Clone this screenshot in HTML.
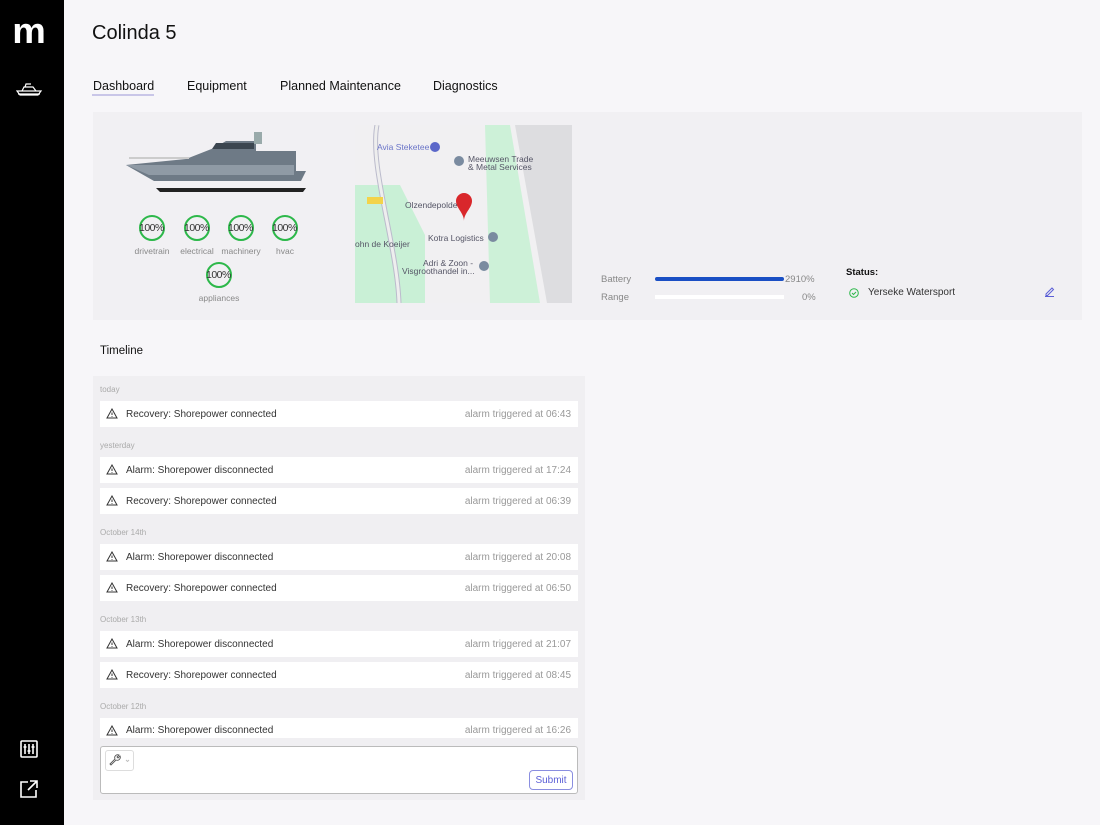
<!DOCTYPE html>
<html><head><meta charset="utf-8"><style>
*{box-sizing:border-box;margin:0;padding:0}
body{width:1100px;height:825px;background:#f7f6f9;font-family:"Liberation Sans",sans-serif;position:relative;overflow:hidden;color:#222}
.side{position:absolute;left:0;top:0;width:64px;height:825px;background:#000}
.abs{position:absolute}
.tab{position:absolute;top:79px;font-size:12.5px;color:#111}
.panel{position:absolute;left:93px;top:112px;width:989px;height:208px;background:#f1f0f3}
.g{position:absolute;width:26px;height:26px;border:2px solid #2db84a;border-radius:50%;font-size:10.5px;line-height:22px;text-align:center;color:#333;letter-spacing:-.5px;text-indent:-2px}
.gl{position:absolute;font-size:8.5px;color:#888;text-align:center;width:70px}
.tl{position:absolute;left:93px;top:376px;width:492px;height:424px;background:#f0eff2}
.lbl{position:absolute;left:100px;font-size:8px;color:#aaa}
.row{position:absolute;left:100px;width:478px;height:26px;background:#fff;font-size:10px;line-height:27px;color:#333;padding-left:26px}
.row .r{position:absolute;right:7px;top:0;color:#999}
.row svg{position:absolute;left:6px;top:7px}
</style></head><body>
<div class="side">
<div class="abs" style="left:13px;top:13px;color:#fff;font-size:36px;font-weight:bold;line-height:36px;letter-spacing:-1px;transform:scaleX(1.05)">m</div>
<svg class="abs" style="left:16px;top:81px" width="27" height="16" viewBox="0 0 27 16" fill="none" stroke="#fff" stroke-width="1.2"><path d="M1 10h24l-3 4H4zM6 10l2-4h9l3 4M9 6l1-3h5M2 13h22"/></svg>
<svg class="abs" style="left:20px;top:740px" width="18" height="18" viewBox="0 0 18 18" fill="none" stroke="#fff" stroke-width="1.6"><rect x="1" y="1" width="16" height="16" rx="1"/><path d="M5 4v10M9 4v10M13 4v10M3.5 7h3M7.5 11h3M11.5 7h3"/></svg>
<svg class="abs" style="left:20px;top:780px" width="18" height="18" viewBox="0 0 18 18" fill="none" stroke="#fff" stroke-width="1.6"><path d="M8 2H1v15h15v-7M10 1h7v7M17 1L8 10"/></svg>
</div>
<div class="abs" style="left:92px;top:22px;font-size:20px;color:#111">Colinda 5</div>
<div class="tab" style="left:93px">Dashboard</div>
<div class="abs" style="left:92px;top:94px;width:62px;height:2px;background:#c9c6e8"></div>
<div class="tab" style="left:187px">Equipment</div>
<div class="tab" style="left:280px">Planned Maintenance</div>
<div class="tab" style="left:433px">Diagnostics</div>
<div class="panel"></div>
<svg class="abs" style="left:124px;top:128px" width="182" height="66" viewBox="0 0 182 66"><path d="M2 37l60-6 28-11 12-7h30v10h40v20h10l-5 10H30z" fill="#6e7a86"/><path d="M2 37h168v10H25z" fill="#8f9aa5"/><path d="M92 15h38v6H88z" fill="#3c4650"/><rect x="130" y="4" width="8" height="12" fill="#9aa"/><path d="M32 60h150l-3 4H36z" fill="#222"/><path d="M5 30h60" stroke="#ccc" stroke-width="2"/></svg>
<div class="g" style="left:139px;top:215px">100%</div><div class="gl" style="left:117px;top:246px">drivetrain</div>
<div class="g" style="left:184px;top:215px">100%</div><div class="gl" style="left:162px;top:246px">electrical</div>
<div class="g" style="left:228px;top:215px">100%</div><div class="gl" style="left:206px;top:246px">machinery</div>
<div class="g" style="left:272px;top:215px">100%</div><div class="gl" style="left:250px;top:246px">hvac</div>
<div class="g" style="left:206px;top:262px">100%</div><div class="gl" style="left:184px;top:293px">appliances</div>
<svg class="abs" style="left:355px;top:125px" width="217" height="178" viewBox="0 0 217 178"><rect width="217" height="178" fill="#f1f0f2"/><path d="M0 60h45l25 50v68H0z" fill="#c9f0d6"/><path d="M130 0h25l30 178h-50z" fill="#cdf1d8"/><path d="M160 0h57v178h-25z" fill="#dddde0"/><path d="M22 0c-8 40 20 120 22 178" stroke="#bbc" stroke-width="5" fill="none"/><path d="M22 0c-8 40 20 120 22 178" stroke="#eee" stroke-width="3" fill="none"/><rect x="12" y="72" width="16" height="7" fill="#f3d34a"/><path d="M101 76a8 8 0 0 1 16 0c0 7-8 12-8 20c0-8-8-13-8-20z" fill="#d9272b"/><circle cx="104" cy="36" r="5" fill="#7a8ba0"/><circle cx="138" cy="112" r="5" fill="#7a8ba0"/><circle cx="129" cy="141" r="5" fill="#7a8ba0"/><circle cx="80" cy="22" r="5" fill="#5b67c9"/><g font-family="Liberation Sans" font-size="8.5" fill="#556"><text x="22" y="25" fill="#6a74c8">Avia Steketee</text><text x="113" y="37">Meeuwsen Trade</text><text x="113" y="45">&amp; Metal Services</text><text x="50" y="83">Olzendepolde</text><text x="73" y="116">Kotra Logistics</text><text x="0" y="122">ohn de Koeijer</text><text x="68" y="141">Adri &amp; Zoon -</text><text x="47" y="149">Visgroothandel in...</text></g></svg>
<div class="abs" style="left:601px;top:274px;font-size:9.5px;color:#888">Battery</div>
<div class="abs" style="left:601px;top:292px;font-size:9.5px;color:#888">Range</div>
<div class="abs" style="left:655px;top:277px;width:129px;height:4px;background:#1a4fc4;border-radius:2px"></div>
<div class="abs" style="left:655px;top:295px;width:129px;height:4px;background:#fff"></div>
<div class="abs" style="left:785px;top:274px;font-size:9.5px;color:#888">2910%</div>
<div class="abs" style="left:802px;top:292px;font-size:9.5px;color:#888">0%</div>
<div class="abs" style="left:846px;top:267px;font-size:9.5px;font-weight:bold;color:#111">Status:</div>
<svg class="abs" style="left:849px;top:288px" width="10" height="10"><circle cx="5" cy="5" r="4.3" fill="none" stroke="#2db84a"/><path d="M3 5l1.5 1.5L7 4" stroke="#2db84a" fill="none"/></svg>
<div class="abs" style="left:868px;top:287px;font-size:10px;color:#333">Yerseke Watersport</div>
<svg class="abs" style="left:1044px;top:286px" width="11" height="11" fill="none" stroke="#5b5fd6"><path d="M2 8l6-6 1.5 1.5-6 6H2zM1 10.5h9"/></svg>
<div class="abs" style="left:100px;top:345px;font-size:11.5px;color:#111">Timeline</div>
<div class="tl"></div>
<div class="lbl" style="top:385px">today</div>
<div class="lbl" style="top:441px">yesterday</div>
<div class="lbl" style="top:528px">October 14th</div>
<div class="lbl" style="top:615px">October 13th</div>
<div class="lbl" style="top:702px">October 12th</div>
<div id="rows"></div>
<div class="abs" style="left:100px;top:746px;width:478px;height:48px;background:#fff;border:1px solid #bbb;border-radius:3px"></div>
<div class="abs" style="left:105px;top:750px;width:29px;height:21px;border:1px solid #ddd;border-radius:3px"></div>
<svg class="abs" style="left:108px;top:754px" width="24" height="12" fill="none" stroke="#555" stroke-width=".9"><path d="M2 10l5-5a3 3 0 0 1 4-4l-2 2 1 1 2-2a3 3 0 0 1-4 4l-5 5z"/><path d="M18 6l1.5 1.5L21 6" stroke="#bbb"/></svg>
<div class="abs" style="left:529px;top:770px;width:44px;height:20px;border:1px solid #8a8ee0;border-radius:4px;color:#5b5fd6;font-size:10px;line-height:19px;text-align:center">Submit</div>
<script>
var R=[[401,"Recovery: Shorepower connected","06:43"],[457,"Alarm: Shorepower disconnected","17:24"],[488,"Recovery: Shorepower connected","06:39"],[544,"Alarm: Shorepower disconnected","20:08"],[575,"Recovery: Shorepower connected","06:50"],[631,"Alarm: Shorepower disconnected","21:07"],[662,"Recovery: Shorepower connected","08:45"],[718,"Alarm: Shorepower disconnected","16:26"]];
var h="";R.forEach(function(r){h+='<div class="row" style="top:'+r[0]+'px'+(r[0]==718?';height:20px;line-height:25px;overflow:hidden':'')+'"><svg width="12" height="11" viewBox="0 0 12 11" fill="none" stroke="#333" stroke-width="1"><path d="M6 1L11 10H1z"/><path d="M6 4.5v2.5M6 8v.8"/></svg>'+r[1]+'<span class="r">alarm triggered at '+r[2]+'</span></div>'});
document.getElementById("rows").innerHTML=h;
</script>
</body></html>
